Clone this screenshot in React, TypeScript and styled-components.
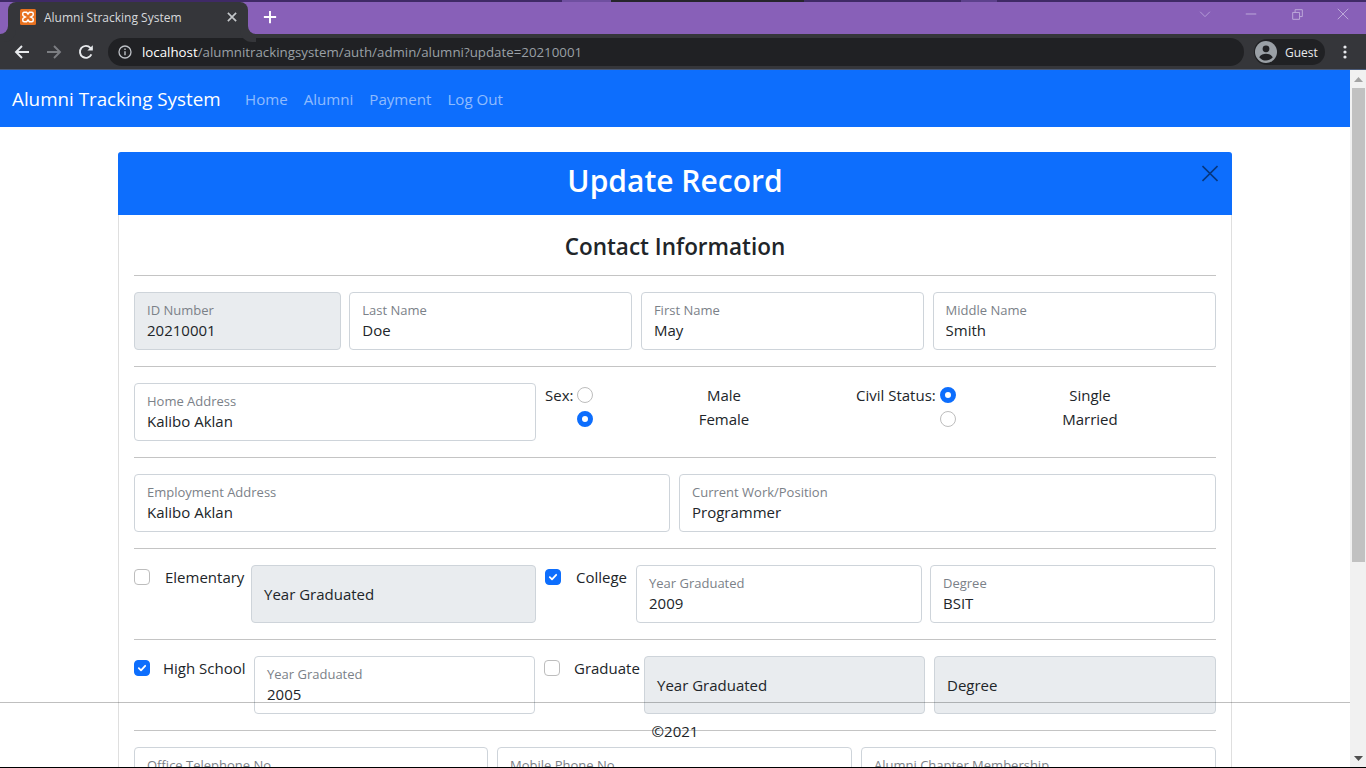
import React from "react";
import styled, { createGlobalStyle } from "styled-components";

const Global = createGlobalStyle`
  html, body { margin: 0; padding: 0; height: 100%; overflow: hidden; background: #fff; }
  * { box-sizing: border-box; }
  body { font-family: "Open Sans", "Noto Sans", "Liberation Sans", sans-serif; font-size: 15px; color: #212529; }
`;

const Page = styled.div`
  width: 1366px; height: 768px; display: flex; flex-direction: column; overflow: hidden;
  position: relative; border-bottom: 1px solid #000;
`;

/* ---------- browser chrome ---------- */
const TopStrip = styled.div`height: 2px; display: flex; background: #3f2a66; flex: none;`;
const StripPiece = styled.div<{ $w: number; $c?: string }>`
  width: ${p => p.$w}px; background: ${p => p.$c || "transparent"};
`;
const TitleBar = styled.div`
  height: 32px; background: #8860b8; display: flex; align-items: flex-start; flex: none; padding-left: 8px;
`;
const Tab = styled.div`
  width: 240px; height: 32px; background: #35363a; border-radius: 8px 8px 0 0;
  display: flex; align-items: center; padding: 0 10px 2px 12px; position: relative;
  &::before, &::after { content: ""; position: absolute; bottom: 0; width: 8px; height: 8px; background: #8860b8; }
  &::before { left: -8px; border-bottom-right-radius: 8px; box-shadow: 4px 4px 0 4px #35363a; }
  &::after { right: -8px; border-bottom-left-radius: 8px; box-shadow: -4px 4px 0 4px #35363a; }
`;
const TabTitle = styled.span`
  flex: 1; margin-left: 8px; font-size: 12px; color: #d7d9dc; white-space: nowrap;
`;
const NewTab = styled.div`
  width: 28px; height: 30px; margin-left: 8px; display: flex; align-items: center; justify-content: center;
`;
const WindowControls = styled.div`
  margin-left: auto; display: flex; height: 24px; align-items: center;
`;
const WinBtn = styled.div`
  width: 46px; height: 24px; display: flex; align-items: center; justify-content: center;
`;
const Toolbar = styled.div`
  height: 36px; background: #35363a; border-bottom: 1px solid #4a5a78; display: flex; align-items: center;
  flex: none; padding: 1px 0 0 6px;
`;
const NavIcon = styled.div`
  width: 32px; height: 28px; display: flex; align-items: center; justify-content: center;
`;
const Omnibox = styled.div`
  margin-left: 6px; width: 1136px; height: 28px; background: #202124; border-radius: 14px;
  display: flex; align-items: center; padding-left: 10px;
`;
const Url = styled.div`
  margin-left: 10px; font-size: 13.3px; color: #9aa0a6; white-space: nowrap;
  b { font-weight: 400; color: #fff; }
`;
const GuestChip = styled.div`
  margin-left: 10px; width: 71px; height: 26px; background: #202124; border-radius: 13px;
  display: flex; align-items: center; padding-left: 1px; gap: 8px; font-size: 12px; color: #e8eaed;
`;
const Dots = styled.div`
  margin-left: 10px; width: 20px; display: flex; justify-content: center;
`;

/* ---------- page ---------- */
const Viewport = styled.div`flex: 1; min-height: 0; display: flex; overflow: hidden;`;
const Content = styled.div`flex: 1; min-width: 0; overflow: hidden;`;

const Scrollbar = styled.div`
  width: 16px; background: #f1f1f1; display: flex; flex-direction: column; align-items: center; flex: none;
`;
const ScrollArrow = styled.div`height: 18px; flex: none; display: flex; align-items: center; justify-content: center;`;
const ScrollThumb = styled.div`width: 13px; height: 474px; margin-left: 1px; background: #c1c1c1; flex: none;`;
const ScrollTrack = styled.div`flex: 1;`;

const Navbar = styled.nav`
  height: 57px; background: #0d6efd; display: flex; align-items: center; padding: 1px 12px 0; flex: none;
`;
const Brand = styled.div`font-size: 18.8px; color: #fff; margin-right: 16px; white-space: nowrap; width: 209px;`;
const NavLink = styled.div`
  font-size: 15.1px; color: rgba(255,255,255,.55); padding: 0 8px; white-space: nowrap;
`;

const CardWrap = styled.div`padding: 25px 118px 0;`;
const Card = styled.div`
  width: 1114px; border: 1px solid rgba(0,0,0,.125); border-radius: 4px; background: #fff;
`;
const CardHead = styled.div`
  height: 63px; margin: -1px -1px 0; background: #0d6efd; border-radius: 3px 3px 0 0; position: relative;
  display: flex; align-items: center; justify-content: center; padding-bottom: 6px;
`;
const Title = styled.h1`
  margin: 0; font-size: 30px; font-weight: 600; color: #fff; line-height: 1.2;
`;
const CloseBtn = styled.div`
  position: absolute; right: 14px; top: 13px; width: 16px; height: 17px; display: flex;
`;
const CardBody = styled.div`padding: 16px 15px 0;`;
const Heading = styled.h4`
  margin: 0; padding-top: 4px; font-size: 22.5px; font-weight: 600; line-height: 24px; text-align: center; color: #212529;
`;
const Rule = styled.hr`
  margin: 16px 0; border: 0; border-top: 1px solid #c4c4c4; height: 0;
`;
const Row = styled.div<{ $cols?: string; $gap?: number }>`
  display: grid; grid-template-columns: ${p => p.$cols || "1fr"}; column-gap: ${p => p.$gap ?? 8}px;
`;
const FieldBox = styled.div<{ $off?: boolean }>`
  height: 58px; border: 1px solid #ced4da; border-radius: 4px;
  background: ${p => (p.$off ? "#e9ecef" : "#fff")};
  padding: 8px 12px 0; display: flex; flex-direction: column; min-width: 0;
`;
const FieldLabel = styled.label`
  font-size: 13px; line-height: 18px; color: #7b8188; white-space: nowrap;
`;
const FieldValue = styled.input`
  border: 0; padding: 0; margin: 1px 0 0; background: transparent; outline: none; width: 100%;
  font: inherit; font-size: 15px; line-height: 20px; height: 20px; color: #212529;
`;
const EmptyLabel = styled.div`
  font-size: 15px; line-height: 20px; margin-top: 10px; color: #212529; white-space: nowrap;
`;
const FieldShift = styled.div`margin-left: 4px; width: 282px;`;

const ChoiceGroup = styled.div<{ $cols: string }>`
  display: grid; grid-template-columns: ${p => p.$cols}; grid-auto-rows: 24px; align-items: center;
  font-size: 15px;
`;
const ChoiceLabel = styled.span`white-space: nowrap;`;
const OptionText = styled.span`text-align: center; white-space: nowrap;`;
const Radio = styled.span<{ $on?: boolean }>`
  width: 16px; height: 16px; border-radius: 50%; display: block;
  background: #fff;
  border: ${p => (p.$on ? "5px solid #0d6efd" : "1px solid #bdbdbd")};
`;
const CheckGroup = styled.div<{ $gap: number; $ml?: number }>`
  display: flex; align-items: flex-start; gap: ${p => p.$gap}px; margin-left: ${p => p.$ml || 0}px;
  font-size: 15px; line-height: 24px; white-space: nowrap;
`;
const Box = styled.span<{ $on?: boolean }>`
  width: 16px; height: 16px; margin-top: 4px; border-radius: 4px; flex: none;
  background: ${p => (p.$on ? "#0d6efd" : "#fff")};
  border: 1px solid ${p => (p.$on ? "#0d6efd" : "#bdbdbd")};
  display: flex; align-items: center; justify-content: center;
`;

const Footer = styled.footer`
  position: absolute; left: 0; right: 16px; bottom: 0; height: 65px; border-top: 1px solid rgba(0,0,0,.25);
  display: flex; justify-content: center; padding-top: 18px; font-size: 15px; line-height: 20px; color: #212529;
`;

/* ---------- small parts ---------- */
const Field = ({ label, value, off }: { label: string; value?: string; off?: boolean }) =>
  value === undefined ? (
    <FieldBox $off><EmptyLabel>{label}</EmptyLabel></FieldBox>
  ) : (
    <FieldBox $off={off}>
      <FieldLabel>{label}</FieldLabel>
      <FieldValue readOnly value={value} />
    </FieldBox>
  );

const Check = ({ on, text, gap, ml }: { on?: boolean; text: string; gap: number; ml?: number }) => (
  <CheckGroup $gap={gap} $ml={ml}>
    <Box $on={on}>
      {on && (
        <svg width="10" height="10" viewBox="0 0 10 10" fill="none">
          <path d="M1.8 5.2 4 7.3 8.2 2.8" stroke="#fff" strokeWidth="1.8" strokeLinecap="round" strokeLinejoin="round" />
        </svg>
      )}
    </Box>
    {text}
  </CheckGroup>
);

const Favicon = () => (
  <svg width="16" height="16" viewBox="0 0 16 16">
    <rect width="16" height="16" rx="1.5" fill="#e8711f" />
    <path d="M4.2 3.2h2.4L8 5l1.4-1.8h2.4c1 0 1.4.7 1.4 1.5v1c0 .7-.4 1.2-1 1.4L10.6 8l1.6.9c.6.2 1 .7 1 1.4v1c0 .8-.4 1.5-1.4 1.5H9.4L8 11l-1.4 1.8H4.2c-1 0-1.4-.7-1.4-1.5v-1c0-.7.4-1.2 1-1.4L5.4 8 3.8 7.1c-.6-.2-1-.7-1-1.4v-1c0-.8.4-1.5 1.4-1.5Z" fill="none" stroke="#fff" strokeWidth="1.5" />
  </svg>
);

const Line = ({ d, c = "#fff", w = 2, size = 16 }: { d: string; c?: string; w?: number; size?: number }) => (
  <svg width={size} height={size} viewBox="0 0 16 16" fill="none">
    <path d={d} stroke={c} strokeWidth={w} />
  </svg>
);

export default function App() {
  return (
    <>
      <Global />
      <Page>
        <TopStrip>
          <StripPiece $w={562} />
          <StripPiece $w={49} $c="#6f4fa0" />
          <StripPiece $w={193} $c="#26252b" />
          <StripPiece $w={157} />
          <StripPiece $w={36} $c="#5c418c" />
        </TopStrip>
        <TitleBar>
          <Tab>
            <Favicon />
            <TabTitle>Alumni Stracking System</TabTitle>
            <Line size={12} d="M2.5 2.5 13.5 13.5M13.5 2.5 2.5 13.5" c="#c4c7ca" w={2.2} />
          </Tab>
          <NewTab>
            <Line size={14} d="M8 1v14M1 8h14" w={2.2} />
          </NewTab>
          <WindowControls>
            <WinBtn><Line size={12} d="M1.5 5 8 11.5 14.5 5" c="#b9a3d9" w={1.2} /></WinBtn>
            <WinBtn><Line size={12} d="M1 8h14" c="#c2b0dd" w={1.2} /></WinBtn>
            <WinBtn>
              <Line size={11} d="M1 5h10v10H1zM4.5 5V1h10.5v10H11" c="#c2b0dd" w={1.3} />
            </WinBtn>
            <WinBtn><Line size={12} d="M1 1 15 15M15 1 1 15" c="#c2b0dd" w={1.2} /></WinBtn>
          </WindowControls>
        </TitleBar>
        <Toolbar>
          <NavIcon><Line d="M15 8H2M8 2 2 8l6 6" c="#e8eaed" w={1.9} /></NavIcon>
          <NavIcon><Line d="M1 8h13M8 2l6 6-6 6" c="#7c7e82" w={1.9} /></NavIcon>
          <NavIcon>
            <svg width="16" height="16" viewBox="0 0 16 16" fill="none">
              <path d="M13.4 10.4A6 6 0 1 1 12.4 3.8L14 5.4" stroke="#e8eaed" strokeWidth="1.9" />
              <path d="M14.8 1.2v5.4H9.4z" fill="#e8eaed" />
            </svg>
          </NavIcon>
          <Omnibox>
            <svg width="14" height="14" viewBox="0 0 14 14" fill="none">
              <circle cx="7" cy="7" r="6" stroke="#bdc1c6" strokeWidth="1.3" />
              <path d="M7 6.2v4M7 3.6v1.5" stroke="#bdc1c6" strokeWidth="1.4" />
            </svg>
            <Url><b>localhost</b>/alumnitrackingsystem/auth/admin/alumni?update=20210001</Url>
          </Omnibox>
          <GuestChip>
            <svg width="22" height="22" viewBox="0 0 22 22">
              <circle cx="11" cy="11" r="11" fill="#9aa0a6" />
              <circle cx="11" cy="7.8" r="3.4" fill="#202124" />
              <path d="M4.2 16.2c1.6-2.4 4.2-3.4 6.8-3.4s5.2 1 6.8 3.4c-1.6 2-4 3.4-6.8 3.4s-5.2-1.4-6.8-3.4Z" fill="#202124" />
            </svg>
            Guest
          </GuestChip>
          <Dots>
            <svg width="4" height="14" viewBox="0 0 4 14" fill="#e8eaed">
              <circle cx="2" cy="2" r="1.6" /><circle cx="2" cy="7" r="1.6" /><circle cx="2" cy="12" r="1.6" />
            </svg>
          </Dots>
        </Toolbar>

        <Viewport>
          <Content>
            <Navbar>
              <Brand>Alumni Tracking System</Brand>
              <NavLink>Home</NavLink>
              <NavLink>Alumni</NavLink>
              <NavLink>Payment</NavLink>
              <NavLink>Log Out</NavLink>
            </Navbar>
            <CardWrap>
              <Card>
                <CardHead>
                  <Title>Update Record</Title>
                  <CloseBtn>
                    <svg width="16" height="17" viewBox="0 0 16 17" fill="none">
                      <path d="M.5 1 15.5 16M15.5 1 .5 16" stroke="#06377f" strokeWidth="1.6" />
                    </svg>
                  </CloseBtn>
                </CardHead>
                <CardBody>
                  <Heading>Contact Information</Heading>
                  <Rule />
                  <Row $cols="206.6px 283px 283px 283px" $gap={8.67}>
                    <Field label="ID Number" value="20210001" off />
                    <Field label="Last Name" value="Doe" />
                    <Field label="First Name" value="May" />
                    <Field label="Middle Name" value="Smith" />
                  </Row>
                  <Rule />
                  <Row $cols="402px 320px 360px" $gap={0}>
                    <Field label="Home Address" value="Kalibo Aklan" />
                    <ChoiceGroup $cols="9px 32px 16px 262px">
                      <span />
                      <ChoiceLabel>Sex:</ChoiceLabel>
                      <Radio />
                      <OptionText>Male</OptionText>
                      <span /><span />
                      <Radio $on />
                      <OptionText>Female</OptionText>
                    </ChoiceGroup>
                    <ChoiceGroup $cols="84px 16px 268px">
                      <ChoiceLabel>Civil Status:</ChoiceLabel>
                      <Radio $on />
                      <OptionText>Single</OptionText>
                      <span />
                      <Radio />
                      <OptionText>Married</OptionText>
                    </ChoiceGroup>
                  </Row>
                  <Rule />
                  <Row $cols="536px 537px" $gap={9}>
                    <Field label="Employment Address" value="Kalibo Aklan" />
                    <Field label="Current Work/Position" value="Programmer" />
                  </Row>
                  <Rule />
                  <Row $cols="109px 285px 84px 286px 285px" $gap={8}>
                    <Check text="Elementary" gap={15} />
                    <Field label="Year Graduated" />
                    <Check on text="College" gap={15} ml={1} />
                    <Field label="Year Graduated" value="2009" />
                    <Field label="Degree" value="BSIT" />
                  </Row>
                  <Rule />
                  <Row $cols="115px 281px 99px 281px 286px" $gap={5}>
                    <Check on text="High School" gap={13} />
                    <Field label="Year Graduated" value="2005" />
                    <Check text="Graduate" gap={14} ml={4} />
                    <Field label="Year Graduated" />
                    <FieldShift><Field label="Degree" /></FieldShift>
                  </Row>
                  <Rule />
                  <Row $cols="354px 355px 355px" $gap={9}>
                    <Field label="Office Telephone No." value="" />
                    <Field label="Mobile Phone No." value="" />
                    <Field label="Alumni Chapter Membership" value="" />
                  </Row>
                </CardBody>
              </Card>
            </CardWrap>
          </Content>
          <Scrollbar>
            <ScrollArrow>
              <svg width="9" height="5" viewBox="0 0 9 5"><path d="M4.5 0 9 5H0z" fill="#a3a3a3" /></svg>
            </ScrollArrow>
            <ScrollThumb />
            <ScrollTrack />
            <ScrollArrow>
              <svg width="9" height="5" viewBox="0 0 9 5"><path d="M0 0h9L4.5 5z" fill="#505050" /></svg>
            </ScrollArrow>
          </Scrollbar>
        </Viewport>
        <Footer>©2021</Footer>
      </Page>
    </>
  );
}
